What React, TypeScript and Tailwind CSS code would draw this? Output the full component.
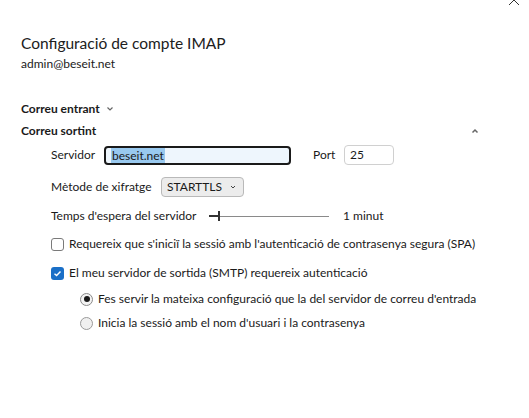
import React from "react";

export default function App() {
  return (
    <div className="w-[529px] h-[418px] bg-white relative overflow-hidden text-[#1a1a1a]" style={{ fontFamily: '"Segoe UI", Lato, "Noto Sans", sans-serif' }}>
      <svg className="absolute left-[508px] top-[-6px]" width="12" height="12" viewBox="0 0 12 12">
        <path d="M1 1 L11 11 M11 1 L1 11" stroke="#333" strokeWidth="1" fill="none" />
      </svg>
      <div className="pl-[21px] pt-[32px]">
        <div className="text-[15.5px] leading-[22px] text-[#202020]">Configuració de compte IMAP</div>
        <div className="text-[12px] leading-[16px] mt-[2px]">admin@beseit.net</div>
        <div className="mt-[28px] flex items-center h-[18px] text-[12px] font-bold">
          <span>Correu entrant</span>
          <svg className="ml-[6px]" width="8" height="8" viewBox="0 0 8 8">
            <path d="M1.5 2.5 L4 5 L6.5 2.5" stroke="#666" strokeWidth="1.2" fill="none" />
          </svg>
        </div>
        <div className="mt-[4px] flex items-center h-[18px] text-[12px] font-bold w-[458px] justify-between">
          <span>Correu sortint</span>
          <svg width="8" height="8" viewBox="0 0 8 8">
            <path d="M1.5 5.5 L4 3 L6.5 5.5" stroke="#666" strokeWidth="1.5" fill="none" />
          </svg>
        </div>
        <div className="pl-[30px] text-[12px]">
          <div className="mt-[5px] flex items-center h-[20px]">
            <span className="w-[53px] shrink-0">Servidor</span>
            <div className="w-[187px] h-[19px] rounded-[4px] border-2 border-[#1a1a1a] bg-[#eef6fd] flex items-center pl-[5px]">
              <span className="bg-[#99c9ef] leading-[15px] px-[1px]">beseit.net</span>
            </div>
            <span className="ml-[22px] w-[31px] shrink-0">Port</span>
            <div className="w-[50px] h-[20px] rounded-[4px] border border-[#d0d0d0] flex items-center pl-[5px]">25</div>
          </div>
          <div className="mt-[12px] flex items-center h-[20px]">
            <span className="w-[110px] shrink-0">Mètode de xifratge</span>
            <div className="w-[83px] h-[20px] rounded-[4px] border border-[#b9b9b9] bg-[#ececec] flex items-center pl-[5px] justify-between pr-[6px]">
              <span>STARTTLS</span>
              <svg width="8" height="8" viewBox="0 0 8 8">
                <path d="M2 3 L4 5 L6 3" stroke="#444" strokeWidth="1" fill="none" />
              </svg>
            </div>
          </div>
          <div className="mt-[9px] flex items-center h-[20px]">
            <span className="w-[158px] shrink-0">Temps d'espera del servidor</span>
            <div className="relative w-[120px] h-[10px] flex items-center">
              <div className="w-full h-px bg-[#8a8a8a]" />
              <div className="absolute left-0 w-[10px] h-[2px] bg-[#333]" />
              <div className="absolute left-[9px] top-0 w-[2px] h-[10px] bg-[#333]" />
            </div>
            <span className="ml-[14px]">1 minut</span>
          </div>
          <div className="mt-[9px] flex items-center h-[18px]">
            <div className="w-[13px] h-[13px] rounded-[3px] border border-[#7a7a7a] bg-white" />
            <span className="ml-[5px]">Requereix que s'iniciï la sessió amb l'autenticació de contrasenya segura (SPA)</span>
          </div>
          <div className="mt-[11px] flex items-center h-[18px]">
            <div className="w-[13px] h-[13px] rounded-[3px] bg-[#1a6fc7] flex items-center justify-center">
              <svg width="9" height="9" viewBox="0 0 9 9">
                <path d="M1.5 4.7 L3.6 6.6 L7.5 2.4" stroke="white" strokeWidth="1.4" fill="none" />
              </svg>
            </div>
            <span className="ml-[5px]">El meu servidor de sortida (SMTP) requereix autenticació</span>
          </div>
          <div className="pl-[29px]">
            <div className="mt-[8px] flex items-center h-[18px]">
              <div className="w-[13px] h-[13px] rounded-full border border-[#8a8a8a] bg-[#f3f3f3] flex items-center justify-center">
                <div className="w-[6px] h-[6px] rounded-full bg-[#1a1a1a]" />
              </div>
              <span className="ml-[5px]">Fes servir la mateixa configuració que la del servidor de correu d'entrada</span>
            </div>
            <div className="mt-[6px] flex items-center h-[18px]">
              <div className="w-[13px] h-[13px] rounded-full border border-[#9a9a9a] bg-[#f0f0f0]" />
              <span className="ml-[5px]">Inicia la sessió amb el nom d'usuari i la contrasenya</span>
            </div>
          </div>
        </div>
      </div>
    </div>
  );
}
